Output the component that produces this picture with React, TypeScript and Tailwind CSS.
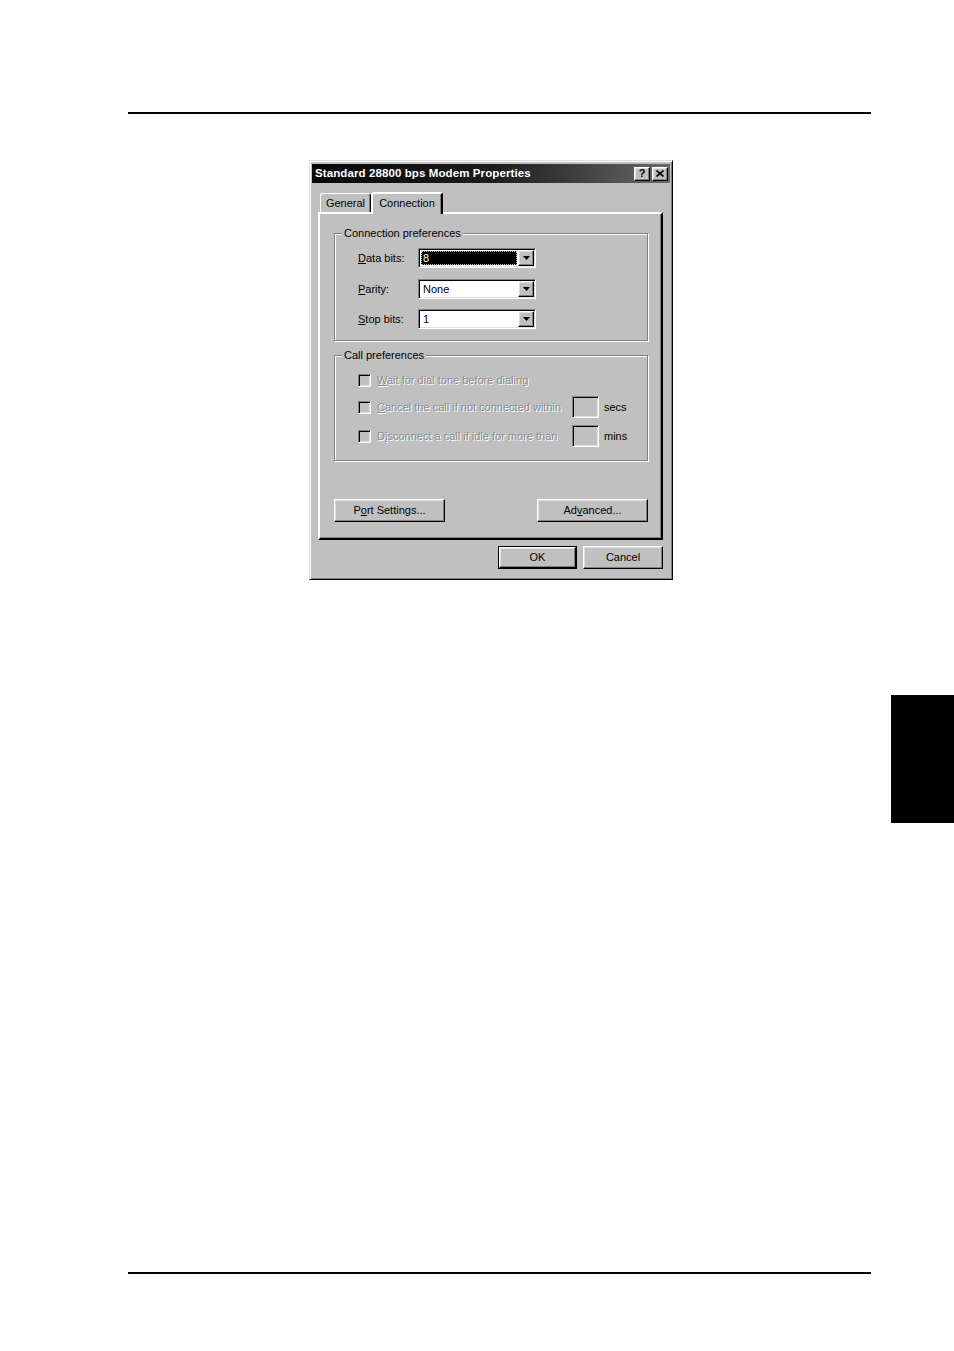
import React from 'react';

// ===== WIN95 BEVELS =====
const raised =
  'border border-t-white border-l-white border-r-black border-b-black shadow-[inset_-1px_-1px_0_#808080,inset_1px_1px_0_#dfdfdf]';
const sunken =
  'border border-t-[#808080] border-l-[#808080] border-r-white border-b-white shadow-[inset_1px_1px_0_#000,inset_-1px_-1px_0_#dfdfdf]';
const disabledText = 'text-[#8c8c8c] [text-shadow:1px_1px_0_#ffffff]';
const etched = 'border border-[#808080] shadow-[inset_1px_1px_0_#fff,1px_1px_0_#fff] min-w-0';

const Arrow: React.FC = () => (
  <svg width="7" height="4" viewBox="0 0 7 4">
    <polygon points="0,0 7,0 3.5,4" fill="#000" />
  </svg>
);

interface ComboProps {
  value: string;
  selected?: boolean;
}

const Combo: React.FC<ComboProps> = ({ value, selected }) => (
  <div className={`w-[118px] h-[20px] bg-white flex p-[1px] ${sunken}`}>
    <div className="flex-1 flex items-center pl-[1px] pr-[1px]">
      {selected ? (
        <div className="w-full h-[14px] bg-black text-white border border-dotted border-[#bdbdbd] flex items-center pl-[1px] leading-[12px]">
          {value}
        </div>
      ) : (
        <span className="pl-[2px] leading-[14px]">{value}</span>
      )}
    </div>
    <div className={`w-[16px] h-[16px] bg-[#c0c0c0] flex items-center justify-center ${raised}`}>
      <Arrow />
    </div>
  </div>
);

const ComboRow: React.FC<{ label: React.ReactNode; value: string; selected?: boolean; className?: string }> = ({
  label,
  value,
  selected,
  className = '',
}) => (
  <div className={`flex items-center ${className}`}>
    <span className="w-[60px]">{label}</span>
    <Combo value={value} selected={selected} />
  </div>
);

const Check: React.FC = () => <div className={`w-[13px] h-[13px] bg-[#c0c0c0] shrink-0 ${sunken}`} />;

const Edit: React.FC = () => <div className={`w-[27px] h-[22px] bg-[#c0c0c0] shrink-0 ${sunken}`} />;

const Button: React.FC<{ children: React.ReactNode; className?: string }> = ({ children, className = '' }) => (
  <div className={`h-[23px] bg-[#c0c0c0] flex items-center justify-center ${raised} ${className}`}>{children}</div>
);

const Dialog: React.FC = () => (
  <div className="w-[364px] h-[420px] bg-[#c0c0c0] border border-t-[#dfdfdf] border-l-[#dfdfdf] border-r-black border-b-black shadow-[inset_1px_1px_0_#fff,inset_-1px_-1px_0_#808080] px-[2px] pt-[3px] pb-[2px] flex flex-col text-[11px] text-black">
    {/* title bar */}
    <div className="h-[19px] bg-gradient-to-r from-[#080808] via-[#1c1c1c] to-[#6a6a6a] flex items-center pl-[3px] pr-[2px]">
      <span className="text-white font-bold text-[11.5px] tracking-[0.1px] flex-1">
        Standard 28800 bps Modem Properties
      </span>
      <div className={`w-[16px] h-[14px] bg-[#c0c0c0] flex items-center justify-center font-bold text-[11px] leading-none ${raised}`}>
        ?
      </div>
      <div className={`ml-[2px] w-[16px] h-[14px] bg-[#c0c0c0] flex items-center justify-center ${raised}`}>
        <svg width="8" height="7" viewBox="0 0 8 7">
          <path d="M0.5 0.5 L7.5 6.5 M7.5 0.5 L0.5 6.5" stroke="#000" strokeWidth="1.6" />
        </svg>
      </div>
    </div>

    {/* tabs */}
    <div className="mt-[9px] ml-[6px] mr-[7px] flex flex-col">
      <div className="flex items-end h-[22px] relative z-10 -mb-[2px]">
        <div className="ml-[2px] w-[51px] h-[19px] border border-t-white border-l-white border-r-black border-b-0 rounded-t-[3px] shadow-[inset_-1px_0_0_#808080] flex items-center justify-center mb-[2px]">
          General
        </div>
        <div className="w-[72px] h-[22px] bg-[#c0c0c0] border-2 border-t-white border-l-white border-r-black border-b-0 rounded-t-[3px] shadow-[inset_-1px_0_0_#808080] flex items-start justify-center pt-[1px]">
          Connection
        </div>
      </div>

      {/* panel */}
      <div className="h-[328px] border-2 border-t-white border-l-white border-r-black border-b-black shadow-[inset_-1px_-1px_0_#808080] pl-[14px] pr-[13px] pt-[13px] flex flex-col">
        <fieldset className={`${etched} pb-[11px]`}>
          <legend className="ml-[7px] px-[2px] bg-[#c0c0c0] leading-[13px]">Connection preferences</legend>
          <div className="flex flex-col pt-[8px] pl-[23px]">
            <ComboRow
              label={
                <>
                  <span className="underline">D</span>ata bits:
                </>
              }
              value="8"
              selected
            />
            <ComboRow
              className="mt-[11px]"
              label={
                <>
                  <span className="underline">P</span>arity:
                </>
              }
              value="None"
            />
            <ComboRow
              className="mt-[10px]"
              label={
                <>
                  <span className="underline">S</span>top bits:
                </>
              }
              value="1"
            />
          </div>
        </fieldset>

        <fieldset className={`mt-[8px] ${etched} pb-[13px]`}>
          <legend className="ml-[7px] px-[2px] bg-[#c0c0c0] leading-[13px]">Call preferences</legend>
          <div className="flex flex-col pt-[7px] pl-[23px]">
            <div className="h-[22px] flex items-center">
              <Check />
              <span className={`ml-[6px] ${disabledText}`}>
                <span className="underline">W</span>ait for dial tone before dialing
              </span>
            </div>
            <div className="mt-[5px] h-[22px] flex items-center">
              <Check />
              <span className={`ml-[6px] w-[195px] whitespace-nowrap ${disabledText}`}>
                <span className="underline">C</span>ancel the call if not connected within
              </span>
              <Edit />
              <span className="ml-[5px]">secs</span>
            </div>
            <div className="mt-[7px] h-[22px] flex items-center">
              <Check />
              <span className={`ml-[6px] w-[195px] whitespace-nowrap ${disabledText}`}>
                D<span className="underline">i</span>sconnect a call if idle for more than
              </span>
              <Edit />
              <span className="ml-[5px]">mins</span>
            </div>
          </div>
        </fieldset>

        <div className="mt-auto mb-[16px] flex justify-between">
          <Button className="w-[111px]">
            P<span className="underline">o</span>rt Settings...
          </Button>
          <Button className="w-[111px]">
            Ad<span className="underline">v</span>anced...
          </Button>
        </div>
      </div>

      {/* OK / Cancel */}
      <div className="mt-[6px] flex justify-end gap-[6px]">
        <div className="w-[79px] h-[23px] border border-black">
          <div className={`w-full h-full bg-[#c0c0c0] flex items-center justify-center ${raised}`}>OK</div>
        </div>
        <Button className="w-[80px]">Cancel</Button>
      </div>
    </div>
  </div>
);

const App: React.FC = () => {
  return (
    <div className="w-[954px] h-[1351px] bg-white flex flex-col font-['Liberation_Sans',Arial,sans-serif]">
      <div className="mt-[112px] ml-[128px] w-[743px] h-[2px] bg-black" />
      <div className="mt-[46px] ml-[309px]">
        <Dialog />
      </div>
      <div className="mt-[115px] ml-[891px] w-[63px] h-[128px] bg-black" />
      <div className="mt-[449px] ml-[128px] w-[743px] h-[2px] bg-black" />
    </div>
  );
};

export default App;
